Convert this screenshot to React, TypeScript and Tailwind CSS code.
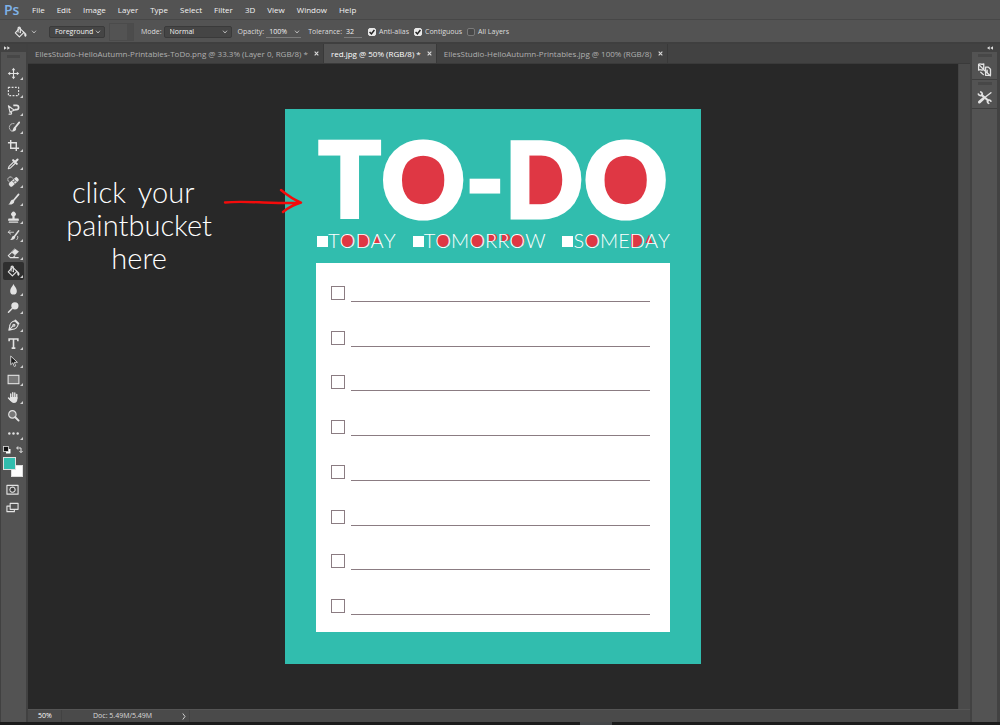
import type { ReactNode } from "react";

const menus = ["File", "Edit", "Image", "Layer", "Type", "Select", "Filter", "3D", "View", "Window", "Help"];

const tabs = [
  { title: "EllesStudio-HelloAutumn-Printables-ToDo.png @ 33.3% (Layer 0, RGB/8) *", active: false },
  { title: "red.jpg @ 50% (RGB/8) *", active: true },
  { title: "EllesStudio-HelloAutumn-Printables.jpg @ 100% (RGB/8)", active: false },
];

function Icon({ children, className = "size-[14px]" }: { children: ReactNode; className?: string }) {
  return (
    <svg
      viewBox="0 0 14 14"
      className={className}
      fill="none"
      stroke="currentColor"
      strokeWidth="1.200"
      strokeLinecap="round"
      strokeLinejoin="round"
      aria-hidden="true"
    >
      {children}
    </svg>
  );
}

const bucket = (
  <>
    <path d="M5.2 3.2 1.4 7.4l4.4 4.4 4.9-4.9-4.4-4.3z" />
    <path d="M4.4 6.4V2.6c0-1.9 2.4-1.9 2.4 0v4.2" />
    <circle cx="6.8" cy="7" r=".8" fill="currentColor" stroke="none" />
    <path d="M10.4 6.6c1.8.2 2.8 1.6 2.8 3.6 0 1.5-1.8 1.5-1.8 0 0-1.600-.4-2.400-1-3.600z" fill="currentColor" strokeWidth=".5" />
  </>
);

const tools: { name: string; art: ReactNode; flyout?: boolean }[] = [
  {
    name: "Move",
    art: (
      <>
        <path d="M7 3v8M3 7h8" />
        <path d="M7 .8 9 3.400H5zM7 13.200l2-2.600H5zM.8 7l2.600-2v4zM13.200 7l-2.600-2v4z" fill="currentColor" stroke="none" />
      </>
    ),
  },
  { name: "Rectangular Marquee", art: <rect x="1.500" y="2.500" width="11" height="9" strokeDasharray="2 1.500" strokeLinecap="butt" /> },
  {
    name: "Magnetic Lasso",
    art: (
      <>
        <path d="M1.500 3 6 6.500l2.500 1M1.500 3l1.800 6.800M8.500 7.500 3 9.800M3 9.800c1.500-.8 2.800.7 1.500 2.200H2.200" />
        <path d="M6.800 2.500h3.400a2 2 0 0 1 0 4.600H8.500" strokeWidth="1.800" strokeLinecap="butt" />
      </>
    ),
  },
  {
    name: "Quick Selection",
    art: (
      <>
        <path d="M7.500 2.800a4 4 0 1 0-1.500 8.300" strokeDasharray="1.300 1.300" strokeWidth=".9" />
        <path d="M13.200 1.500 8.800 7" strokeWidth="2" />
        <path d="M8.300 6.200 10 8.400c-.5 2.600-2.400 3.300-5 2.800 1.500-.8 1.300-3.800 3.300-5z" fill="currentColor" stroke="none" />
      </>
    ),
  },
  { name: "Crop", art: <path d="M4 1v9h9M1 4h9v9" strokeWidth="1.500" strokeLinecap="butt" strokeLinejoin="miter" /> },
  {
    name: "Eyedropper",
    art: (
      <>
        <path d="M7.800 4.600 2.200 10.200l-.8 2.400 2.400-.8 5.600-5.600" />
        <path d="m6.600 3.400 4 4M9 5.200l2.400-2.500" strokeWidth="2.200" />
      </>
    ),
  },
  {
    name: "Spot Healing Brush",
    art: (
      <>
        <path d="M6 3.300a2.800 2.800 0 1 0-3.700 4" strokeDasharray="1.200 1.200" strokeWidth=".9" />
        <rect x="1.300" y="5" width="12" height="5" rx="1.800" transform="rotate(-42 7.300 7.500)" fill="currentColor" stroke="none" />
        <path d="M5.600 6.200 8.500 9.400M7.600 4.500l3 3.200" stroke="#535353" strokeWidth=".7" />
        <path d="M7.400 7h.1M8.300 6.200h.1" stroke="#535353" />
      </>
    ),
  },
  {
    name: "Brush",
    art: (
      <>
        <path d="M12.500 1.500 7 8" strokeWidth="1.800" />
        <path d="m5.900 7 2 2.100c-.7 2.800-3 3.600-6.500 3.200 2.300-.8 1.800-4.400 4.500-5.300z" fill="currentColor" stroke="none" />
      </>
    ),
  },
  {
    name: "Clone Stamp",
    art: (
      <>
        <path d="M5.800 8V5.600a2.500 2.500 0 1 1 2.400 0V8h3.600c.8 0 1 .6 1 2.400H1.200C1.200 8.600 1.400 8 2.200 8z" fill="currentColor" stroke="none" />
        <path d="M2.500 12h9" />
      </>
    ),
  },
  {
    name: "History Brush",
    art: (
      <>
        <path d="M12.500 2 8 8" strokeWidth="1.700" />
        <path d="m7 7.200 1.900 1.800c-.7 2.400-2.500 3.200-5.700 2.900 2-.8 1.600-4 3.800-4.700z" fill="currentColor" stroke="none" />
        <path d="M1.500 3.500h5.500M4 5.500 1.300 3.500l1.900-2M11.500 8c.4 1.500 0 2.600-1 3.500" strokeWidth=".9" />
      </>
    ),
  },
  {
    name: "Eraser",
    art: (
      <>
        <path d="M8.600 2.200 12.500 5 8.700 8.700 5 5.600z" fill="currentColor" strokeWidth=".6" />
        <path d="M4.700 6 1.400 9.200 3.600 11.500h3l1.800-2M6.600 11.500h5.500" />
      </>
    ),
  },
  { name: "Paint Bucket", art: bucket },
  { name: "Blur", art: <path d="M7 1.200c1 2.600 3.600 4.500 3.600 7.400a3.600 3.900 0 0 1-7.200 0C3.400 5.700 6 3.800 7 1.200z" fill="currentColor" stroke="none" /> },
  {
    name: "Dodge",
    art: (
      <>
        <circle cx="8.500" cy="5.200" r="3.900" fill="currentColor" stroke="none" />
        <path d="m5.600 8-4 4.200" strokeWidth="1.600" />
      </>
    ),
  },
  {
    name: "Pen",
    art: (
      <>
        <path d="M8.500 2 12 5.500c-.3 3-3 5.500-6.500 5.700L2 12l.8-3.500C3 5 5.500 2.300 8.500 2zM2 12l4.500-4.500" />
        <circle cx="7.400" cy="6.700" r="1.100" />
        <path d="m9 1.500 3.500 3.500" strokeWidth="1.600" />
      </>
    ),
  },
  { name: "Type", art: <path d="M2.300 4.500V2.200h9.400v2.300M7 2.200v9.600M5 12h4" strokeWidth="1.700" strokeLinecap="butt" strokeLinejoin="miter" /> },
  {
    name: "Path Selection",
    art: <path d="M4 1.500v9l2.300-2.100 1.600 4 1.500-.7-1.600-3.800h3z" fill="#1d1d1d" strokeWidth=".9" />,
  },
  { name: "Rectangle", art: <rect x="1.200" y="2.500" width="11.600" height="9" fill="#777777" strokeLinejoin="miter" /> },
  {
    name: "Hand",
    art: (
      <>
        <path d="M4 8.500V3.300M6.200 7V1.800M8.400 7V2.200M10.500 8V3.600M1.600 7.500 4 10" strokeWidth="1.500" />
        <path d="M3.300 6.500h7.900v2.200c0 2.600-1.500 4.300-3.700 4.300-2 0-3.200-1.200-4.900-4z" fill="currentColor" stroke="none" />
      </>
    ),
  },
  {
    name: "Zoom",
    flyout: false,
    art: (
      <>
        <circle cx="5.800" cy="5.800" r="4" fill="#777777" />
        <path d="m8.900 8.900 3.600 3.600" strokeWidth="2" />
      </>
    ),
  },
  {
    name: "Edit Toolbar",
    art: (
      <>
        <circle cx="2.500" cy="7" r="1.300" fill="currentColor" stroke="none" />
        <circle cx="7" cy="7" r="1.300" fill="currentColor" stroke="none" />
        <circle cx="11.500" cy="7" r="1.300" fill="currentColor" stroke="none" />
      </>
    ),
  },
];

function Chevron() {
  return (
    <svg viewBox="0 0 8 6" className="h-[4px] w-[6px]" fill="none" stroke="#c8c8c8" strokeWidth="1.300" aria-hidden="true">
      <path d="m1 1 3 3.500L7 1" />
    </svg>
  );
}

function DoubleChevron({ flip = false }: { flip?: boolean }) {
  return (
    <svg viewBox="0 0 10 6" className={flip ? "h-[4px] w-[6px] rotate-180" : "h-[4px] w-[6px]"} fill="#e0e0e0" aria-hidden="true">
      <path d="M0 0 4.500 3 0 6zM5.500 0 10 3 5.500 6z" />
    </svg>
  );
}

function Dropdown({ label, value, width }: { label: string; value: string; width: string }) {
  return (
    <span className={`relative flex h-[12px] items-center rounded-xs border border-[#3a3a3a] bg-[#454545] ${width}`}>
      <select aria-label={label} defaultValue={value} className="h-full w-full appearance-none bg-transparent pl-[5px] text-[7px] font-medium text-[#f4f4f4] outline-none">
        <option>{value}</option>
      </select>
      <span className="pointer-events-none absolute right-[3px]">
        <Chevron />
      </span>
    </span>
  );
}

function Tick({ label, checked }: { label: string; checked: boolean }) {
  return (
    <label className="flex items-center gap-[3px]">
      <span className="relative flex size-[8px]">
        <input
          type="checkbox"
          defaultChecked={checked}
          className="peer size-[8px] appearance-none rounded-xs border border-[#7a7a7a] bg-[#484848] checked:border-[#e8e8e8] checked:bg-[#e8e8e8]"
        />
        <svg viewBox="0 0 8 8" className="pointer-events-none absolute inset-0 hidden size-[8px] peer-checked:block" fill="none" stroke="#222" strokeWidth="1.500" aria-hidden="true">
          <path d="m1.600 4 1.800 1.900 3-3.900" />
        </svg>
      </span>
      {label}
    </label>
  );
}

function MenuBar() {
  return (
    <header className="flex h-5 items-center border-b border-[#474747] bg-[#535353] pl-1">
      <span className="w-[22px] text-[14px] leading-none font-semibold text-[#7fb2e8]">Ps</span>
      <nav aria-label="Main menu" className="flex">
        {menus.map((m) => (
          <button key={m} className="px-[6px] text-[8px] font-medium text-[#f2f2f2]">
            {m}
          </button>
        ))}
      </nav>
    </header>
  );
}

function OptionsBar() {
  return (
    <div className="flex h-6 items-center border-b-2 border-[#3f3f3f] bg-[#535353] pt-[2px] pl-[14px] text-[7px] font-medium text-[#dedede]">
      <button aria-label="Tool preset" className="mr-[12px] flex items-center gap-1 text-[#e6e6e6]">
        <Icon className="size-[13px]">{bucket}</Icon>
        <Chevron />
      </button>
      <Dropdown label="Fill source" value="Foreground" width="w-[56px]" />
      <span className="mr-[7px] ml-1 flex h-[18px] w-[25px] items-center justify-end border border-[#4b4b4b]">
        <span className="h-full w-[6px] bg-[#4c4c4c]" />
      </span>
      <span className="mr-[2px]">Mode:</span>
      <Dropdown label="Mode" value="Normal" width="w-[68px]" />
      <label htmlFor="opacity" className="mr-[2px] ml-[6px]">
        Opacity:
      </label>
      <input id="opacity" defaultValue="100%" className="h-[12px] w-[26px] border-b border-[#7a7a7a] bg-transparent pl-[3px] text-[#f4f4f4] outline-none" />
      <button aria-label="Opacity slider" className="mr-[7px] flex h-[12px] w-[9px] items-center justify-center border-b border-[#7a7a7a]">
        <Chevron />
      </button>
      <label htmlFor="tolerance" className="mr-[2px]">
        Tolerance:
      </label>
      <input id="tolerance" defaultValue="32" className="mr-[6px] h-[12px] w-[18px] border-b border-[#7a7a7a] bg-transparent pl-[2px] text-[#f4f4f4] outline-none" />
      <div className="flex gap-[5px]">
        <Tick label="Anti-alias" checked />
        <Tick label="Contiguous" checked />
        <Tick label="All Layers" checked={false} />
      </div>
    </div>
  );
}

function ToolBar() {
  return (
    <aside className="flex w-7 shrink-0 flex-col border-r-2 border-l border-[#414141] bg-[#535353] text-[#e2e2e2]">
      <div className="flex h-[8px] items-center bg-[#424242] pl-[3px]">
        <DoubleChevron />
      </div>
      <div className="mx-[6px] mt-[3px] mb-[6px] h-[3px] bg-[#474747]" />
      <div className="flex flex-col">
        {tools.map((t) => (
          <button
            key={t.name}
            aria-label={t.name}
            className={`relative flex h-[18px] items-center justify-center pr-[1px] ${t.name === "Paint Bucket" ? "mx-[2px] rounded-xs bg-[#2f2f2f]" : "mx-[2px]"}`}
          >
            <Icon className="size-[13px]">{t.art}</Icon>
            {t.flyout !== false && (
              <svg viewBox="0 0 3 3" className="absolute right-[1px] bottom-[2px] size-[3px]" fill="#d0d0d0" aria-hidden="true">
                <path d="M3 0v3H0z" />
              </svg>
            )}
          </button>
        ))}
      </div>
      <div className="mt-[4px] flex justify-between px-[2px]">
        <button aria-label="Default colors">
          <svg viewBox="0 0 8 8" className="size-[8px]" aria-hidden="true">
            <rect x="3" y="3" width="4.500" height="4.500" fill="#fff" />
            <rect x=".5" y=".5" width="5" height="5" fill="#111" stroke="#ddd" strokeWidth=".8" />
          </svg>
        </button>
        <button aria-label="Swap colors" className="mr-[1px]">
          <svg viewBox="0 0 8 8" className="size-[8px]" fill="none" stroke="#e2e2e2" aria-hidden="true">
            <path d="M2 2h4v4M3.300.5 1.500 2l1.800 1.500M4.500 5 6 6.800 7.500 5" />
          </svg>
        </button>
      </div>
      <div className="relative mt-[3px] ml-[2px] h-5 w-5">
        <button aria-label="Background color" className="absolute right-0 bottom-0 size-[12px] border border-[#dddddd] bg-white" />
        <button aria-label="Foreground color" className="absolute top-0 left-0 size-[13px] border border-[#e0e0e0] bg-[#31bdae]" />
      </div>
      <div className="mt-[3px] mr-[3px] flex flex-col items-center">
        <button aria-label="Quick mask" className="flex h-[18px] items-center">
          <Icon className="size-[13px]">
            <rect x="1" y="2.500" width="12" height="9.500" />
            <circle cx="7" cy="7.200" r="2.800" strokeDasharray="1.200 .8" fill="#3d3d3d" />
          </Icon>
        </button>
        <button aria-label="Screen mode" className="flex h-[18px] items-center">
          <Icon className="size-[13px]">
            <rect x="1" y="5.500" width="8" height="6" />
            <rect x="4.500" y="2.500" width="8.500" height="6.500" fill="#535353" />
          </Icon>
        </button>
      </div>
    </aside>
  );
}

function Tabs() {
  return (
    <div role="tablist" className="flex h-5 border-b border-[#3a3a3a] bg-[#424242] text-[8px] font-medium">
      {tabs.map((t) => (
        <div
          key={t.title}
          className={`flex items-center gap-[6px] border-r border-[#393939] pr-1 pl-[7px] whitespace-nowrap ${t.active ? "bg-[#535353] text-white" : "text-[#b0b0b0]"}`}
        >
          <button role="tab" aria-selected={t.active}>
            {t.title}
          </button>
          <button aria-label="Close tab">
            <svg viewBox="0 0 6 6" className="size-[5px]" stroke="#dddddd" strokeWidth="1.300" aria-hidden="true">
              <path d="m.8.8 4.400 4.400M5.200.8.8 5.200" />
            </svg>
          </button>
        </div>
      ))}
    </div>
  );
}

const O = (cx: number) => <circle key={cx} cx={cx} cy="12.500" r="6.500" />;
const D = (x: number) => <path key={x} d={`M${x} 6h4.500a6.500 6.500 0 0 1 0 13H${x}z`} />;
const A = (cx: number) => <path key={cx} d={`M${cx} 6.500l3.600 8.500h-7.200z`} />;
const R = (x: number) => <path key={x} d={`M${x} 6h4.500a3.500 3.500 0 0 1 0 7H${x}z`} />;

function FilledWord({ word, fills }: { word: string; fills: ReactNode }) {
  return (
    <span className="flex items-center">
      <span className="mt-[1px] size-[11px] bg-white" />
      <span className="relative font-['Lato',sans-serif] text-[20px] leading-[25px] font-light text-white [font-kerning:none]">
        <svg className="absolute top-0 left-0 -z-10 h-full w-full" fill="#df3744" aria-hidden="true">
          {fills}
        </svg>
        {word}
      </span>
    </span>
  );
}

function Poster() {
  return (
    <article className="relative isolate flex h-[555px] w-[416px] flex-col bg-[#31bdae] px-[31px] pb-8">
      <h1 className="relative mt-[29px] h-[80px] self-center font-['Lato',sans-serif] text-[104px] leading-[80px] font-black whitespace-nowrap text-white [-webkit-text-stroke:3px_#fff] [font-kerning:none] [stroke-linejoin:round]">
        <svg viewBox="0 0 354 80" className="absolute top-0 left-0 -z-10 h-[80px] w-[354px]" fill="#df3744" aria-hidden="true">
          <circle cx="107" cy="41" r="30" />
          <path d="M205 12h18a29 29 0 0 1 0 58h-18z" />
          <circle cx="312" cy="41" r="30" />
        </svg>
        TO-DO
      </h1>
      <div className="mt-[10px] flex h-[25px] items-center justify-between pl-[1px]">
        <FilledWord word="TODAY" fills={[O(19), D(31), A(49)]} />
        <FilledWord word="TOMORROW" fills={[O(19), O(53), R(65), R(78), O(94)]} />
        <FilledWord word="SOMEDAY" fills={[O(19), D(58), A(76)]} />
      </div>
      <ul className="mt-[10px] flex flex-1 flex-col justify-between bg-white pt-[23px] pr-5 pb-[17px] pl-[15px]">
        {Array.from({ length: 8 }, (_, i) => (
          <li key={i} className="flex h-4 gap-[6px]">
            <input type="checkbox" aria-label={`Task ${i + 1}`} className="size-[14px] appearance-none border border-[#8b7c82] bg-white checked:bg-[#8b7c82]" />
            <span className="flex-1 border-b border-[#8b7c82]" />
          </li>
        ))}
      </ul>
      <div className="absolute top-[66px] right-[calc(100%-18px)] flex items-start gap-[11px]">
        <p className="text-center font-['Lato',sans-serif] text-[29px] leading-[33px] font-light whitespace-nowrap text-white">
          <span className="mr-3">
            click <span className="ml-1">your</span>
          </span>
          <br />
          paintbucket
          <br />
          here
        </p>
        <svg viewBox="0 0 80 28" className="mt-[13px] h-7 w-20" fill="none" stroke="#f40b0b" strokeWidth="2.400" strokeLinecap="round" strokeLinejoin="round" aria-hidden="true">
          <path d="M2 14.500c14-1.400 30-.2 46 .2 10 .3 20 .3 29 0M58 2c6 5 12 9.500 20 12.500-7 2-12 4.500-18 9.500" />
        </svg>
      </div>
    </article>
  );
}

function Dock() {
  return (
    <aside className="flex w-[30px] shrink-0 flex-col border-r-3 border-l-2 border-[#424242] bg-[#535353] text-[#e2e2e2]">
      <div className="flex h-[8px] items-center justify-end bg-[#424242] pr-1">
        <DoubleChevron flip />
      </div>
      <button aria-label="History" className="flex h-7 flex-col items-center border-b border-[#3f3f3f] pt-[2px]">
        <span className="mb-[5px] h-[3px] w-[14px] bg-[#474747]" />
        <Icon className="size-[15px]">
          <path d="M1.500 2.200c1.400-1.200 3 .6 4.800-.4v5.400c-1.800 1-3.400-.8-4.800.4zM1.800 2.500l4.800 5 5.800 5.300" />
          <path d="M8 4.800h2.600l2 2v5.600H8zM9.500 7.500v2.500" />
          <path d="M3.500 9.500 6 11.800" />
        </Icon>
      </button>
      <button aria-label="Tool presets" className="flex h-[29px] flex-col items-center border-b border-[#3f3f3f] pt-[2px]">
        <span className="mb-[5px] h-[3px] w-[14px] bg-[#474747]" />
        <Icon className="size-[15px]">
          <path d="m4.500 4.800 6 5" strokeWidth="2" />
          <path d="M1.300 3.800c.8 1.600 2.400 1.800 3.200 1S5 2.500 3.500 1.800M13 10.500c-.8-1.400-2.200-1.500-2.900-.8s-.6 2.100.8 2.800" strokeWidth="1.500" />
          <path d="m13 2.500-5.500 4.300" strokeWidth="1.300" />
          <path d="m6 8-3.800 3.300" strokeWidth="2.600" />
        </Icon>
      </button>
    </aside>
  );
}

export default function App() {
  return (
    <div className="flex min-h-screen flex-col bg-[#1b1b1b] font-['Open_Sans',sans-serif]">
      <MenuBar />
      <OptionsBar />
      <div className="flex flex-1">
        <ToolBar />
        <div className="flex min-w-0 flex-1 flex-col">
          <Tabs />
          <div className="flex flex-1">
            <main className="flex flex-1 items-center justify-center bg-[#282828]">
              <Poster />
            </main>
            <div className="w-[12px] border-l border-[#434343] bg-[#4a4a4a]" />
          </div>
          <footer className="flex h-[13px] items-center border-t border-[#555555] bg-[#4a4a4a] text-[7px] font-medium text-[#dadada]">
            <span className="flex h-full w-[34px] items-center border-r border-[#424242] pl-[10px] text-white">50%</span>
            <span className="w-[89px] pl-[31px] whitespace-nowrap">Doc: 5.49M/5.49M</span>
            <button aria-label="Status options" className="flex h-full w-[39px] items-center justify-end border-r border-[#424242] pr-[3px]">
              <svg viewBox="0 0 4 7" className="h-[7px] w-1" fill="none" stroke="#d0d0d0" aria-hidden="true">
                <path d="m.8.500 2.200 3-2.200 3" />
              </svg>
            </button>
          </footer>
        </div>
        <Dock />
      </div>
      <div className="flex h-[3px] justify-center bg-[#1b1b1b] pl-48">
        <span className="w-8 bg-[#444648]" />
      </div>
    </div>
  );
}
